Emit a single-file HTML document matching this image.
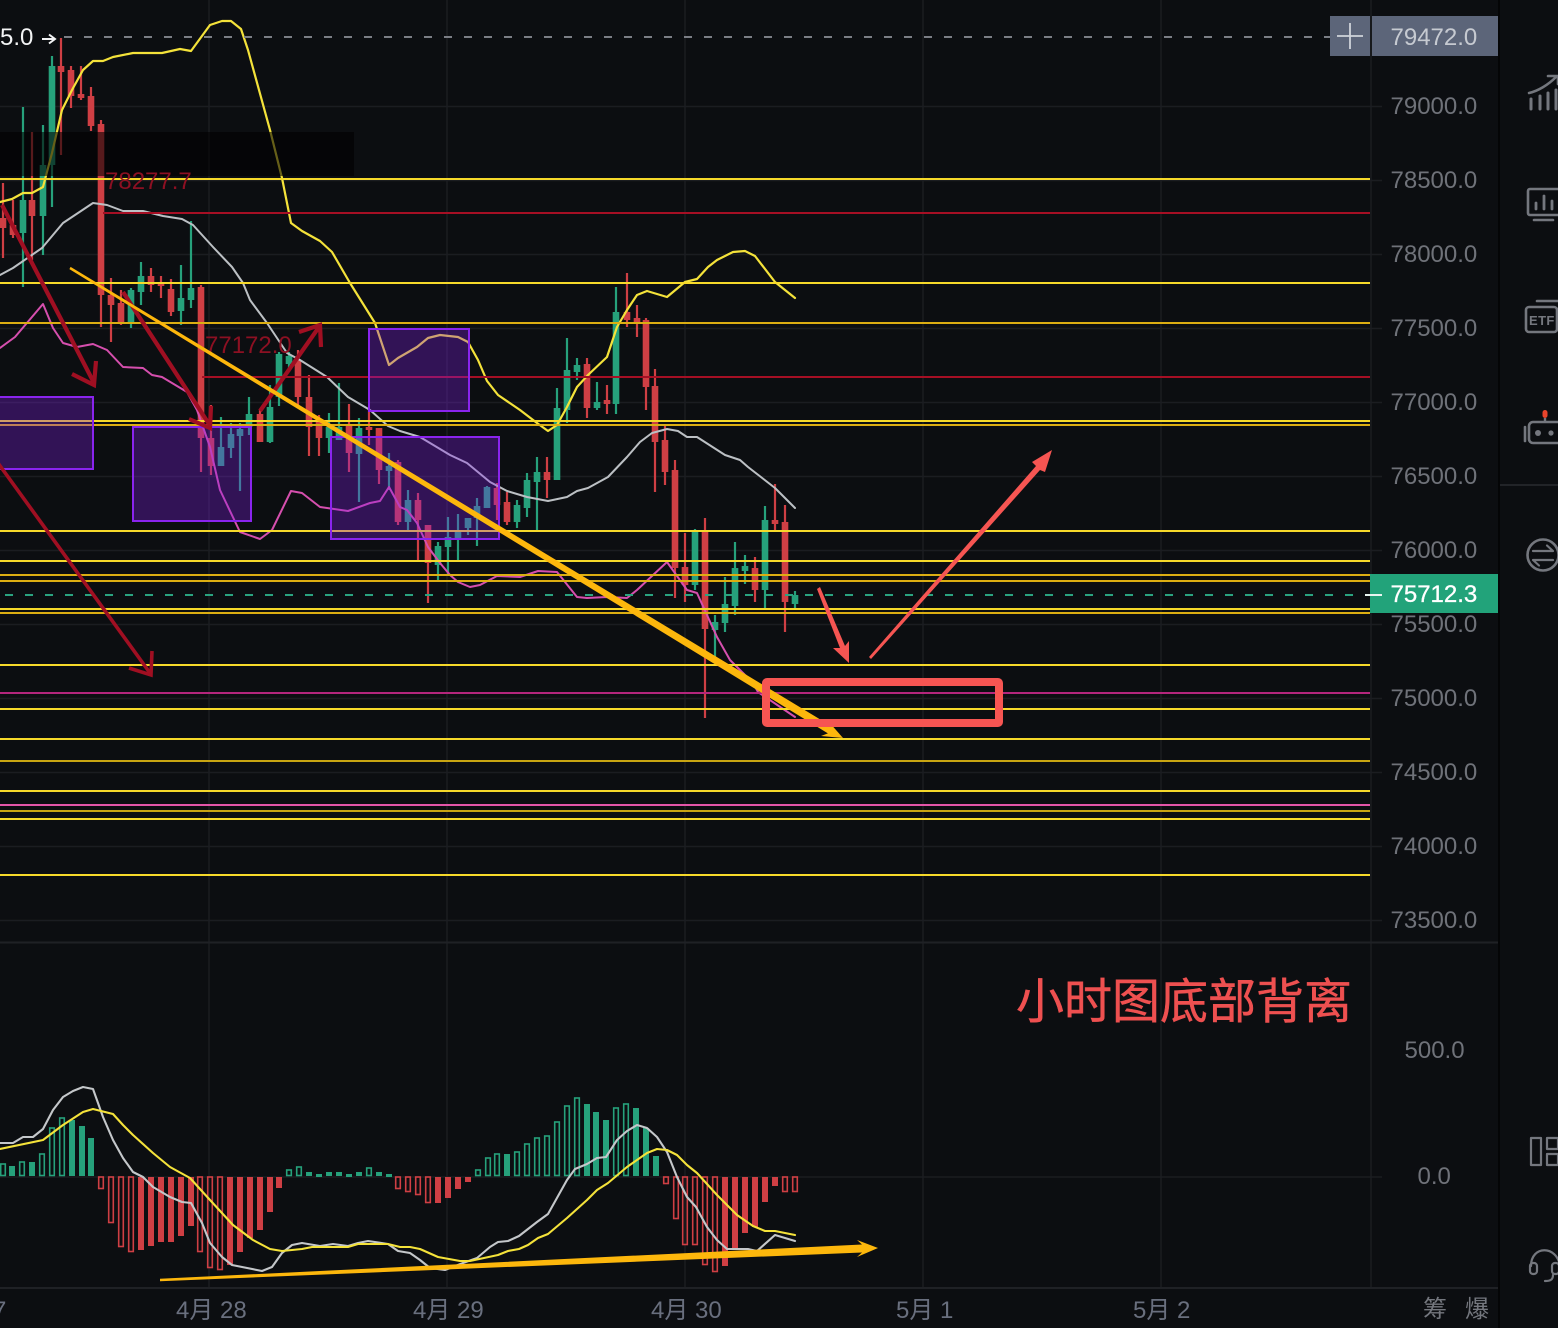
<!DOCTYPE html>
<html><head><meta charset="utf-8"><title>Chart</title>
<style>
html,body{margin:0;padding:0;background:#0c0e11;width:1558px;height:1328px;overflow:hidden}
svg{display:block;position:absolute;left:0;top:0}
text{font-family:"Liberation Sans","Noto Sans CJK SC",sans-serif}
</style></head><body>
<svg width="1558" height="1328" viewBox="0 0 1558 1328" xmlns="http://www.w3.org/2000/svg">
<rect width="1558" height="1328" fill="#0c0e11"/>
<!-- grid -->
<path fill="none" stroke="#1b1d21" stroke-width="1.5" d="M0 106.5H1382M0 180.5H1382M0 254.5H1382M0 328.5H1382M0 402.5H1382M0 476.5H1382M0 550.5H1382M0 624.5H1382M0 698.5H1382M0 772.5H1382M0 846.5H1382M0 920.5H1382M0 1177H1382M209 0V1288M447 0V1288M685 0V1288M923 0V1288M1161 0V1288M1371 0V1288"/>
<path fill="none" stroke="#1f2125" stroke-width="2" d="M0 942.5H1498M0 1288H1498"/>
<!-- candles -->
<g fill="none" stroke="#26a17b">
<path stroke-width="2.2" d="M23 107V287M43 125V255M52 56V207M131 288V328M141 262V305M181 265V325M191 221V308M221 417V465M231 423V458M240 423V491M249 397V435M270 385V443M279 352V406M289 352V372M329 413V453M339 383V430M359 418V502M389 453V490M408 490V530M438 542V580M448 517V575M458 514V562M468 520V535M477 498V546M487 486V508M517 500V528M527 473V517M537 457V530M557 388V480M567 338V423M577 358V380M597 382V410M616 287V414M695 529V590M715 615V658M725 577V632M735 542V615M745 555V584M765 506V608M795 591V608"/>
<path stroke-width="6.6" d="M23 200V233M43 165V216M52 66V165M131 290V322M141 276V292M181 298V311M191 288V300M221 447V466M231 434V448M240 429V436M249 414V427M270 407V442M279 354V397M289 356V364M329 427V438M339 427V440M359 428V454M389 466V471M408 500V522M438 546V565M448 537V547M458 530V538M468 518V528M477 506V518M487 487V508M517 505V522M527 480V508M537 472V482M557 408V480M567 370V410M577 365V372M597 402V408M616 312V404M695 530V585M715 622V630M725 604V623M735 568V606M745 566V571M765 520V590M795 595V604"/>
</g>
<g fill="none" stroke="#cf3f44">
<path stroke-width="2.2" d="M3 183V258M13 200V238M32 132V260M61 38V155M71 66V108M81 66V100M91 87V131M101 120V327M111 278V342M121 290V325M151 268V292M161 276V298M171 279V316M201 285V472M211 405V475M260 410V442M298 350V405M309 375V456M319 415V456M349 404V472M369 410V445M379 428V484M398 460V525M418 493V560M428 525V603M497 483V520M507 492V525M547 457V498M587 358V418M607 385V414M627 273V327M637 305V337M646 318V410M655 369V492M665 426V485M675 460V598M685 533V602M705 518V718M755 557V602M775 484V530M785 505V632"/>
<path stroke-width="6.6" d="M3 218V228M13 225V235M32 200V216M61 66V72M71 70V96M81 94V98M91 96V126M101 124V295M111 295V305M121 303V323M151 276V285M161 283V286M171 289V312M201 287V438M211 438V466M260 414V442M298 360V397M309 397V427M319 421V438M349 426V453M369 427V430M379 428V470M398 462V522M418 500V520M428 525V563M497 488V505M507 502V522M547 472V480M587 364V408M607 400V404M627 312V320M637 318V322M646 320V387M655 386V442M665 440V472M675 470V568M685 567V585M705 530V629M755 568V590M775 520V524M785 522V602"/>
</g>
<!-- Indicator curves -->
<g fill="none" stroke-linejoin="round" stroke-linecap="round">
<polyline stroke="#d64fae" stroke-width="2" points="0,348 15,337 43,304 53,328 63,343 77,347 93,344 107,350 123,367 143,368 152,375 162,377 187,392 197,410 210,447 220,490 240,532 260,539 272,530 291,491 302,493 320,507 348,511 370,503 380,501 389,487 400,507 407,510 417,523 428,547 440,563 450,575 458,582 470,587 480,585 497,576 520,577 538,571 557,572 577,597 587,598 607,597 627,598 637,590 667,562 687,590 697,593 707,615 717,637 730,660 753,683 758,692 795,717"/>
<polyline stroke="#bcc0c4" stroke-width="2" points="0,275 13,268 42,248 63,223 93,203 107,205 123,211 143,211 163,216 182,219 193,225 213,247 232,267 243,283 250,300 267,323 287,353 300,360 327,377 348,397 370,410 388,426 400,431 420,437 450,455 467,463 490,482 507,491 527,497 548,501 567,497 577,491 588,488 608,477 627,457 640,442 652,433 667,429 678,431 687,437 697,437 725,455 740,460 748,467 775,488 795,508"/>
<polyline stroke="#f4e23a" stroke-width="2.2" points="0,202 12,199 23,193 32,193 43,187 52,153 62,110 72,90 83,70 93,61 103,61 113,57 133,53 162,53 180,49 191,51 210,25 222,21 231,21 241,29 248,50 270,130 282,178 291,223 302,231 320,241 332,252 350,283 375,323 389,365 398,358 417,347 428,338 440,335 458,337 468,342 478,360 487,381 498,395 520,410 537,423 548,431 557,425 567,407 577,387 588,375 607,357 617,327 627,310 637,295 647,291 667,297 685,282 697,279 708,267 717,260 733,252 745,251 755,256 775,282 795,298"/>
</g>
<!-- horizontal levels -->
<g fill="none" stroke-width="2">
<path stroke="#f6d92a" d="M0 179H1370M0 283H1370M0 421H1370M0 531H1370M0 561H1370M0 609H1370M0 665H1370M0 709H1370M0 739H1370M0 791H1370M0 819H1370M0 875H1370"/>
<path stroke="#dcae12" d="M0 323H1370M0 425H1370M0 575H1370M0 581H1370M0 613H1370"/>
<path stroke="#c8a512" d="M0 761H1370M0 811H1370"/>
<path stroke="#a60f24" d="M103 213H1370M202 377H1370"/>
<path stroke="#b4267c" d="M0 693H1370"/>
<path stroke="#e455a8" d="M0 805H1370"/>
<path stroke="#2aa37f" stroke-dasharray="8 12" d="M5 595H1370"/>
<path stroke="#7b7e85" stroke-dasharray="8 12" d="M64 37H1330"/>
</g>
<!-- dark block -->
<rect x="0" y="132" width="354" height="44" fill="#000" fill-opacity=".58"/>
<!-- purple boxes -->
<g fill="#8420e8" fill-opacity=".32" stroke="#8a24ee" stroke-width="2">
<rect x="-2" y="397" width="95" height="72"/>
<rect x="133" y="427" width="118" height="94"/>
<rect x="331" y="437" width="168" height="102"/>
<rect x="369" y="329" width="100" height="82"/>
</g>
<!-- red labels -->
<text x="105" y="189" font-size="24" fill="#8c1022">78277.7</text>
<text x="205" y="353" font-size="24" fill="#8c1022">77172.0</text>
<!-- dark red arrows -->
<g fill="none" stroke="#a00f22" stroke-width="4.2" stroke-linejoin="miter">
<path d="M2 205L93 381M72 374L94 385L96 361"/>
<path d="M123 292L209 424M189 419L210 428L211 406"/>
<path d="M260 411L319 327M299 332L320 325L321 347"/>
<path stroke-width="3.6" d="M-2 463L150 673M129 668L151 675L152 651"/>
</g>
<!-- orange trend -->
<polygon fill="#fdb70c" points="70.6,266.9 832.1,726.6 829,722 843,738 821,736 827.9,733.4 69.4,269.1"/>
<!-- salmon arrows -->
<polygon fill="#f65552" points="817,589 820,587 845,646 849,641 849,663 833,648 840,648"/>
<polygon fill="#f65552" points="869,657 871,659 1040,470 1045,472 1052,450 1032,462 1036,466"/>
<rect x="766" y="682" width="233" height="41" fill="none" stroke="#f65552" stroke-width="8" rx="1"/>
<!-- MACD histogram -->
<g fill="#26a17b">
<rect x="9" y="1166" width="6" height="10"/><rect x="29" y="1162" width="6" height="14"/><rect x="69" y="1120" width="6" height="56"/><rect x="79" y="1126" width="6" height="50"/><rect x="88" y="1138" width="6" height="38"/>
<rect x="306" y="1172" width="6" height="4"/><rect x="316" y="1174" width="6" height="3"/><rect x="326" y="1172" width="6" height="4"/><rect x="336" y="1172" width="6" height="4"/><rect x="346" y="1174" width="6" height="3"/><rect x="356" y="1172" width="6" height="4"/><rect x="376" y="1172" width="6" height="4"/><rect x="386" y="1174" width="6" height="3"/>
<rect x="504" y="1154" width="6" height="22"/><rect x="584" y="1104" width="6" height="72"/><rect x="593" y="1112" width="6" height="64"/><rect x="603" y="1120" width="6" height="56"/><rect x="633" y="1108" width="6" height="68"/><rect x="643" y="1128" width="6" height="48"/><rect x="653" y="1156" width="6" height="20"/>
</g>
<g fill="none" stroke="#26a17b" stroke-width="1.6">
<rect x="0.7" y="1164" width="4.6" height="11.5"/><rect x="19.7" y="1162" width="4.6" height="13.5"/><rect x="39.7" y="1154" width="4.6" height="21.5"/><rect x="49.7" y="1128" width="4.6" height="47.5"/><rect x="59.7" y="1118" width="4.6" height="57.5"/>
<rect x="286.7" y="1170" width="4.6" height="5.5"/><rect x="296.7" y="1167" width="4.6" height="8.5"/><rect x="366.7" y="1168" width="4.6" height="7.5"/>
<rect x="475.7" y="1170" width="4.6" height="5.5"/><rect x="485.7" y="1158" width="4.6" height="17.5"/><rect x="494.7" y="1154" width="4.6" height="21.5"/><rect x="514.7" y="1152" width="4.6" height="23.5"/><rect x="524.7" y="1144" width="4.6" height="31.5"/><rect x="534.7" y="1138" width="4.6" height="37.5"/><rect x="544.7" y="1136" width="4.6" height="39.5"/><rect x="554.7" y="1122" width="4.6" height="53.5"/><rect x="564.7" y="1106" width="4.6" height="69.5"/><rect x="574.7" y="1098" width="4.6" height="77.5"/><rect x="613.7" y="1108" width="4.6" height="67.5"/><rect x="623.7" y="1104" width="4.6" height="71.5"/>
</g>
<g fill="#cf3f44">
<rect x="138" y="1177" width="6" height="73"/><rect x="148" y="1177" width="6" height="69"/><rect x="158" y="1177" width="6" height="65"/><rect x="168" y="1177" width="6" height="65"/><rect x="178" y="1177" width="6" height="59"/><rect x="188" y="1177" width="6" height="49"/><rect x="227" y="1177" width="6" height="88"/><rect x="237" y="1177" width="6" height="75"/><rect x="247" y="1177" width="6" height="61"/><rect x="257" y="1177" width="6" height="53"/><rect x="267" y="1177" width="6" height="35"/><rect x="276" y="1177" width="6" height="11"/>
<rect x="435" y="1177" width="6" height="26"/><rect x="445" y="1177" width="6" height="21"/><rect x="455" y="1177" width="6" height="12"/><rect x="465" y="1177" width="6" height="5"/>
<rect x="722" y="1177" width="6" height="89"/><rect x="732" y="1177" width="6" height="73"/><rect x="742" y="1177" width="6" height="56"/><rect x="752" y="1177" width="6" height="50"/><rect x="762" y="1177" width="6" height="25"/><rect x="772" y="1177" width="6" height="9"/>
</g>
<g fill="none" stroke="#cf3f44" stroke-width="1.6">
<rect x="98.7" y="1177" width="4.6" height="11.5"/><rect x="108.7" y="1177" width="4.6" height="45.5"/><rect x="118.7" y="1177" width="4.6" height="69.5"/><rect x="128.7" y="1177" width="4.6" height="74.5"/><rect x="197.7" y="1177" width="4.6" height="74.5"/><rect x="207.7" y="1177" width="4.6" height="90.5"/><rect x="217.7" y="1177" width="4.6" height="92.5"/>
<rect x="395.7" y="1177" width="4.6" height="11.5"/><rect x="405.7" y="1177" width="4.6" height="14.5"/><rect x="415.7" y="1177" width="4.6" height="17.5"/><rect x="425.7" y="1177" width="4.6" height="25.5"/>
<rect x="663.7" y="1177" width="4.6" height="6.5"/><rect x="673.7" y="1177" width="4.6" height="41.5"/><rect x="682.7" y="1177" width="4.6" height="67.5"/><rect x="692.7" y="1177" width="4.6" height="67.5"/><rect x="702.7" y="1177" width="4.6" height="87.5"/><rect x="712.7" y="1177" width="4.6" height="94.5"/>
<rect x="782.7" y="1177" width="4.6" height="14.5"/><rect x="792.7" y="1177" width="4.6" height="14.5"/>
</g>
<!-- MACD lines -->
<g fill="none" stroke-linejoin="round" stroke-linecap="round" stroke-width="2.1">
<polyline stroke="#c4c7ca" points="0,1143 13,1143 23,1137 33,1137 43,1129 53,1110 63,1097 73,1091 83,1087 93,1089 103,1117 113,1140 123,1158 133,1172 143,1177 153,1187 170,1197 182,1202 191,1203 202,1223 210,1243 222,1257 232,1265 262,1271 272,1267 282,1253 292,1245 302,1243 320,1246 333,1244 348,1246 358,1243 368,1241 388,1244 398,1251 410,1253 420,1260 430,1268 445,1270 463,1263 477,1258 490,1247 498,1242 508,1241 519,1236 537,1222 548,1214 567,1180 575,1169 587,1164 597,1158 606,1157 617,1140 627,1131 637,1125 647,1128 657,1137 667,1152 677,1177 687,1197 696,1207 707,1227 717,1240 727,1249 748,1249 757,1251 775,1235 785,1238 795,1241"/>
<polyline stroke="#f4e23a" points="0,1149 43,1140 63,1125 83,1112 93,1109 113,1114 123,1125 133,1135 153,1153 170,1167 190,1178 210,1200 233,1225 253,1240 270,1249 282,1251 302,1249 312,1247 348,1247 358,1244 388,1244 400,1247 410,1247 420,1249 438,1257 460,1261 470,1261 498,1255 508,1251 519,1249 528,1245 538,1238 548,1234 567,1218 587,1200 597,1190 608,1183 627,1167 647,1153 657,1149 667,1150 677,1155 687,1165 697,1173 717,1195 737,1215 753,1226 765,1231 775,1231 795,1235"/>
</g>
<polygon fill="#fdb70c" points="160,1278.8 862,1244.5 857,1240 878,1248 857,1257 862,1252.5 160,1281.2"/>
<!-- left price tag -->
<text x="0" y="45" font-size="24" fill="#f2f3f4">5.0</text>
<path d="M42 39H54M49 34.5L55 39L49 43.5" fill="none" stroke="#f2f3f4" stroke-width="2"/>
<!-- axis labels -->
<g font-size="24" fill="#6f7279">
<text x="1390.5" y="114">79000.0</text>
<text x="1390.5" y="188">78500.0</text>
<text x="1390.5" y="262">78000.0</text>
<text x="1390.5" y="336">77500.0</text>
<text x="1390.5" y="410">77000.0</text>
<text x="1390.5" y="484">76500.0</text>
<text x="1390.5" y="558">76000.0</text>
<text x="1390.5" y="632">75500.0</text>
<text x="1390.5" y="706">75000.0</text>
<text x="1390.5" y="780">74500.0</text>
<text x="1390.5" y="854">74000.0</text>
<text x="1390.5" y="928">73500.0</text>
<text x="1404.5" y="1058">500.0</text>
<text x="1417.5" y="1184">0.0</text>
</g>
<!-- price boxes -->
<rect x="1330" y="16" width="40" height="40" fill="#5c6579"/>
<path d="M1350 23V49M1337 36H1363" stroke="#cfd3da" stroke-width="1.8" fill="none"/>
<rect x="1372" y="16" width="126" height="40" fill="#5c6579"/>
<text x="1390.5" y="45" font-size="24" fill="#c6cad1">79472.0</text>
<rect x="1370" y="574" width="128" height="39" fill="#22a37a"/>
<path d="M1365 595H1382" stroke="#e8f5f0" stroke-width="2"/>
<text x="1390.5" y="602" font-size="24" fill="#fff" stroke="#fff" stroke-width=".3">75712.3</text>
<!-- Chinese annotation -->
<text x="1016" y="1018" font-size="48" fill="#ee5050" stroke="#ee5050" stroke-width=".5">小时图底部背离</text>
<!-- date axis -->
<g font-size="24" fill="#696f7e">
<text x="-7" y="1318">7</text>
<text x="176" y="1318">4月 28</text>
<text x="413" y="1318">4月 29</text>
<text x="651" y="1318">4月 30</text>
<text x="896" y="1318">5月 1</text>
<text x="1133" y="1318">5月 2</text>
</g>
<text x="1423" y="1317" font-size="24" fill="#74777e">筹</text>
<text x="1465" y="1317" font-size="24" fill="#74777e">爆</text>
<!-- sidebar -->
<rect x="1498" y="0" width="2" height="1328" fill="#040506"/>
<path d="M1500 485H1558" stroke="#2a2c30" stroke-width="1.5"/>
<g fill="none" stroke="#74777e" stroke-width="2.6" stroke-linecap="round" stroke-linejoin="round">
<path d="M1529 93C1538 91 1548 85 1556 77M1548 76H1558V84"/>
<path stroke-width="3" d="M1531 99V109M1540 96V109M1548 93V109M1556 90V109"/>
<rect x="1528" y="189" width="34" height="26" rx="2"/>
<path stroke-width="2.8" d="M1536 203V209M1544 196V209M1552 201V209"/>
<path d="M1534 220H1553"/>
<rect x="1526" y="307" width="31" height="25" rx="3"/>
<path d="M1537 301H1560"/>
<rect x="1529" y="422" width="34" height="21" rx="4"/>
<path d="M1525 427V441"/>
<circle cx="1543" cy="555" r="15.5"/>
<path stroke-width="2.2" d="M1533 551H1553L1547 545.5M1553 560H1533L1539 565.5"/>
<rect x="1531" y="1138" width="10" height="27" stroke-width="2.2"/>
<rect x="1547" y="1138" width="11" height="11" stroke-width="2.2"/>
<rect x="1547" y="1154" width="11" height="11" stroke-width="2.2"/>
<path stroke-width="2.2" d="M1531 1266C1531 1245 1557 1245 1560 1266"/>
<rect x="1530" y="1263" width="7" height="11" rx="3" stroke-width="2.2"/>
<rect x="1552" y="1263" width="7" height="11" rx="3" stroke-width="2.2"/>
<path stroke-width="2.2" d="M1553 1275C1553 1280 1550 1281 1545 1281"/>
</g>
<text x="1529" y="325" font-size="13" font-weight="bold" fill="#74777e" letter-spacing=".4">ETF</text>
<circle cx="1538" cy="433" r="3" fill="#74777e"/><circle cx="1551" cy="433" r="2.6" fill="#74777e"/>
<rect x="1542.5" y="410" width="5" height="8" rx="2.5" fill="#e8442c"/>
<path d="M1545 418V422" stroke="#74777e" stroke-width="2.4"/>
</svg>
</body></html>
